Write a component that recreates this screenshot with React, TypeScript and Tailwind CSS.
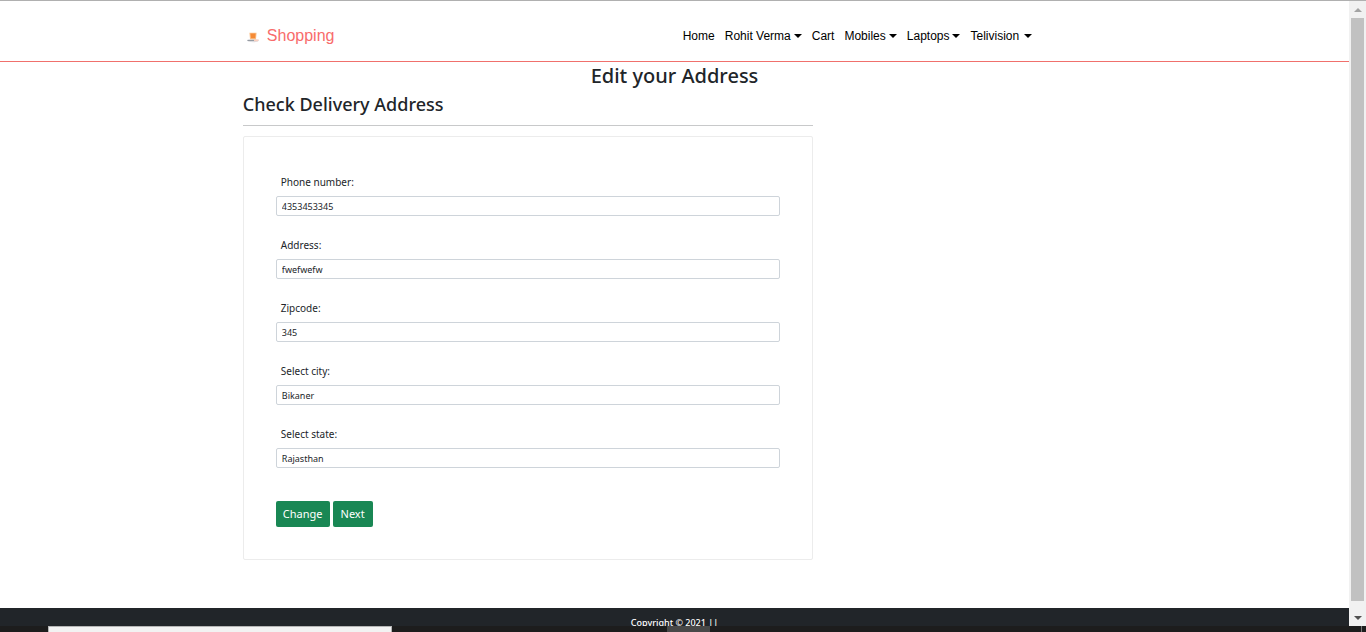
import React from "react";

type NavItem = { label: string; menu?: boolean; spaced?: boolean };

const navItems: NavItem[] = [
  { label: "Home" },
  { label: "Rohit Verma", menu: true },
  { label: "Cart" },
  { label: "Mobiles", menu: true },
  { label: "Laptops", menu: true },
  { label: "Telivision", menu: true, spaced: true },
];

const fields = [
  { id: "phone", label: "Phone number:", value: "4353453345" },
  { id: "address", label: "Address:", value: "fwefwefw" },
  { id: "zipcode", label: "Zipcode:", value: "345" },
  { id: "city", label: "Select city:", value: "Bikaner" },
  { id: "state", label: "Select state:", value: "Rajasthan" },
];

function Logo() {
  return (
    <svg width="20" height="20" viewBox="0 0 20 20" aria-hidden="true">
      <ellipse cx="10" cy="14.6" rx="6" ry="1.6" fill="#dedee2" />
      <path d="M11 13.4h5l-1 1.8h-4z" fill="#fbd0c0" />
      <path d="M4.5 14.4h6.5" stroke="#8d949c" strokeWidth="1" />
      <path d="M6.4 6.8h7.2l-.6 6.4H7z" fill="#fbc088" />
      <path d="M7.4 7.6h5.2l-.4 4.6H8z" fill="#f58a35" />
    </svg>
  );
}

function Caret() {
  return (
    <svg width="8" height="4" viewBox="0 0 8 4" aria-hidden="true">
      <path d="M0 0h8L4 4z" fill="currentColor" />
    </svg>
  );
}

function Header() {
  return (
    <header className="border-b border-[#f0706c]">
      <div className="mx-auto flex h-[60px] w-[64%] items-center justify-between pt-[10px]">
        <a href="#" className="flex items-center gap-1 font-['Liberation_Sans',sans-serif] text-base text-[#f86c6b]">
          <Logo />
          <span>Shopping</span>
        </a>
        <nav className="mr-[74px] flex items-center gap-[10px] font-['Liberation_Sans',sans-serif] text-xs text-black">
          {navItems.map((item) =>
            item.menu ? (
              <button key={item.label} type="button" className={item.spaced ? "flex items-center gap-[5px]" : "flex items-center gap-[3px]"}>
                {item.label}
                <Caret />
              </button>
            ) : (
              <a key={item.label} href="#">
                {item.label}
              </a>
            ),
          )}
        </nav>
      </div>
    </header>
  );
}

function AddressForm() {
  return (
    <form className="rounded-[2px] border border-[#ececec] px-8 pt-[35px] pb-8" onSubmit={(e) => e.preventDefault()}>
      <div className="flex flex-col gap-[19px]">
        {fields.map((field) => (
          <div key={field.id} className="flex flex-col">
            <label htmlFor={field.id} className="mb-1 px-[5px] text-[10px] leading-5">
              {field.label}
            </label>
            <input
              id={field.id}
              type="text"
              defaultValue={field.value}
              className="h-5 w-full rounded-[2px] border border-[#ced4da] px-[5px] text-[9px] text-[#212529] outline-none focus:border-[#86b7fe]"
            />
          </div>
        ))}
      </div>
      <div className="mt-[33px] flex gap-[3px]">
        <button type="submit" className="h-[26px] rounded-[2px] bg-[#198754] px-[7px] text-[11px] text-white">
          Change
        </button>
        <button type="button" className="h-[26px] rounded-[2px] bg-[#198754] px-2 text-[11px] text-white">
          Next
        </button>
      </div>
    </form>
  );
}

function Scrollbar() {
  return (
    <div className="flex w-[17px] shrink-0 flex-col items-center bg-[#f1f1f1]" aria-hidden="true">
      <div className="flex h-[17px] items-center justify-center">
        <svg width="8" height="4" viewBox="0 0 8 4">
          <path d="M0 4h8L4 0z" fill="#a3a3a3" />
        </svg>
      </div>
      <div className="w-[13px] flex-1 bg-[#c1c1c1]" />
      <div className="mt-2 flex h-[17px] items-center justify-center text-[#505050]">
        <Caret />
      </div>
    </div>
  );
}

function Taskbar() {
  return (
    <div className="flex h-[6px] shrink-0 bg-[#1d1d1d]" aria-hidden="true">
      <div className="ml-12 w-[344px] border-x border-t border-[#b5b5b5] bg-[#f2f2f2]" />
      <div className="ml-[275px] w-[43px] bg-[#484848]" />
      <div className="mr-1 ml-auto w-px bg-[#777777]" />
    </div>
  );
}

export default function App() {
  return (
    <div className="flex h-screen flex-col overflow-hidden border-t border-[#b0b0b0] bg-white font-['Noto_Sans','Open_Sans',sans-serif] text-[#212529]">
      <div className="flex min-h-0 flex-1">
        <div className="flex min-w-0 flex-1 flex-col overflow-hidden">
          <Header />
          <main className="mx-auto w-[64%] flex-1">
            <h1 className="text-center text-[20px] leading-7 font-medium">Edit your Address</h1>
            <div className="w-[66%]">
              <h2 className="text-[18px] leading-7 font-medium">Check Delivery Address</h2>
              <hr className="mt-[7px] mb-[10px] border-[#c8c9ca]" />
              <AddressForm />
            </div>
          </main>
          <footer className="h-[18px] shrink-0 bg-[#212529] pt-[7px] text-center text-[9px] leading-4 font-medium text-white">
            Copyright © 2021 ||
          </footer>
        </div>
        <Scrollbar />
      </div>
      <Taskbar />
    </div>
  );
}
